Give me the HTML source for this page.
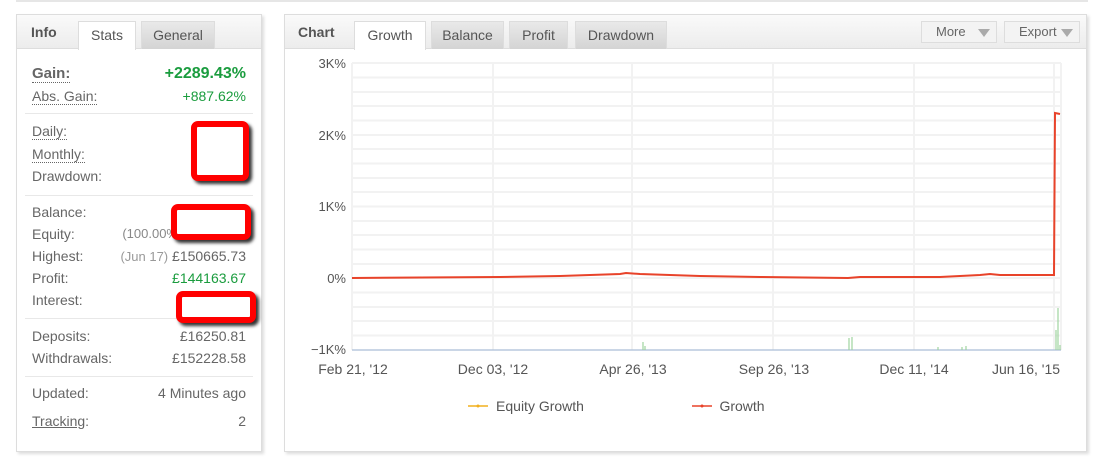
<!DOCTYPE html>
<html><head><style>
body{margin:0;width:1104px;height:462px;background:#fff;font-family:"Liberation Sans",Verdana,sans-serif;position:relative;overflow:hidden;color:#666}
.topbar{position:absolute;left:16px;top:0;width:1072px;height:2px;background:#e6e6e6}
.panel{position:absolute;border:1px solid #ddd;box-shadow:2px 2px 3px #ddd;background:#fff}
.hdr{position:absolute;left:0;top:0;right:0;height:33px;background:linear-gradient(#fafafa,#ececec);border-bottom:1px solid #ddd}
.tab{position:absolute;top:6px;height:27px;font-size:14px;line-height:27px;text-align:center;color:#555;border:1px solid #ddd;border-bottom:none;background:linear-gradient(#e9e9e9,#d4d4d4)}
.tab.act{background:#fff;height:28px}
.ttl{position:absolute;top:0;line-height:35px;font-weight:bold;font-size:14px;color:#555}
.row{position:absolute;left:15px;right:15px;font-size:14px;height:20px}
.row .l{position:absolute;left:0;color:#666}
.row .r{position:absolute;right:0;color:#666}
.u{border-bottom:1px dotted #666}
.g{color:#1a9c3e!important}
.sep{position:absolute;left:8px;right:8px;height:1px;background:#e8e8e8}
.red{position:absolute;border:6px solid #f00;border-radius:7px;background:#fff;box-shadow:3px 3px 3px #333}
.btn{position:absolute;top:6px;height:20px;border:1px solid #ddd;background:#f3f3f3;font-size:13px;line-height:20px;color:#666;padding-left:14px}
.btn i{position:absolute;right:6px;top:7px;border-left:6px solid transparent;border-right:6px solid transparent;border-top:8px solid #aaa}
</style></head><body>
<div class="topbar"></div>
<div class="panel" style="left:16px;top:14px;width:244px;height:436px">
 <div class="hdr"></div>
 <div class="ttl" style="left:14px">Info</div>
 <div class="tab act" style="left:61px;width:56px">Stats</div>
 <div class="tab" style="left:124px;width:72px">General</div>
 <div class="row" style="top:50px;font-weight:bold;font-size:15px"><span class="l u" style="font-weight:bold">Gain:</span><span class="r g" style="font-size:16px">+2289.43%</span></div>
 <div class="row" style="top:73px"><span class="l u">Abs. Gain:</span><span class="r g">+887.62%</span></div>
 <div class="sep" style="top:98px"></div>
 <div class="row" style="top:108px"><span class="l u">Daily:</span></div>
 <div class="row" style="top:131px"><span class="l u">Monthly:</span></div>
 <div class="row" style="top:153px"><span class="l">Drawdown:</span></div>
 <div class="sep" style="top:180px"></div>
 <div class="row" style="top:189px"><span class="l">Balance:</span></div>
 <div class="row" style="top:211px"><span class="l">Equity:</span><span class="r" style="right:68px;font-size:13px;color:#888">(100.00%</span></div>
 <div class="row" style="top:233px"><span class="l">Highest:</span><span class="r"><span style="color:#999;font-size:13px">(Jun 17)</span> £150665.73</span></div>
 <div class="row" style="top:255px"><span class="l">Profit:</span><span class="r g">£144163.67</span></div>
 <div class="row" style="top:277px"><span class="l">Interest:</span></div>
 <div class="sep" style="top:303px"></div>
 <div class="row" style="top:313px"><span class="l">Deposits:</span><span class="r">£16250.81</span></div>
 <div class="row" style="top:335px"><span class="l">Withdrawals:</span><span class="r">£152228.58</span></div>
 <div class="sep" style="top:361px"></div>
 <div class="row" style="top:370px"><span class="l">Updated:</span><span class="r">4 Minutes ago</span></div>
 <div class="row" style="top:398px"><span class="l"><span style="text-decoration:underline">Tracking</span>:</span><span class="r">2</span></div>
 <div class="red" style="left:174px;top:106px;width:46px;height:48px"></div>
 <div class="red" style="left:154px;top:189px;width:68px;height:24px"></div>
 <div class="red" style="left:159px;top:276px;width:68px;height:20px"></div>
</div>
<div class="panel" style="left:284px;top:14px;width:801px;height:436px">
 <div class="hdr"></div>
 <div class="ttl" style="left:13px">Chart</div>
 <div class="tab act" style="left:69px;width:70px">Growth</div>
 <div class="tab" style="left:146px;width:71px">Balance</div>
 <div class="tab" style="left:224px;width:57px">Profit</div>
 <div class="tab" style="left:290px;width:90px">Drawdown</div>
 <div class="btn" style="left:636px;width:60px">More<i></i></div>
 <div class="btn" style="left:719px;width:60px">Export<i></i></div>
</div>
<svg style="position:absolute;left:0;top:0" width="1104" height="462">
 <g stroke="#f2f2f2" stroke-width="2">
  <path d="M352 63V350M493 63V350M632 63V350M773 63V350M914 63V350M1054 63V350M1061 63V350"/>
  <path d="M352 63H1061M352 77.5H1061M352 92H1061M352 106H1061M352 120.5H1061M352 135H1061M352 149H1061M352 163.5H1061M352 178H1061M352 192H1061M352 206.5H1061M352 221H1061M352 235H1061M352 249.5H1061M352 264H1061M352 278H1061M352 292.5H1061M352 307H1061M352 321H1061M352 335.5H1061"/>
 </g>
 <path d="M352 350H1061" stroke="#b8c8dd" stroke-width="1.5"/>
 <g stroke="#9fd49f" stroke-width="1.2">
  <path d="M643 350V342M645 350V346M849 350V338M852 350V337M938 350V347M962 350V347M966 350V346M1056 350V330M1058 350V308M1060 350V345"/>
 </g>
 <path d="M352 278L500 277L560 276L620 274L626 273L640 274L700 276L760 277L848 278L860 277L940 277L980 275L990 274L1000 275L1054 275L1055 113L1060 114" fill="none" stroke="#e8432a" stroke-width="2"/>
 <g font-family="Liberation Sans,sans-serif" font-size="13" fill="#555" text-anchor="end">
  <text x="346" y="68">3K%</text><text x="346" y="140">2K%</text><text x="346" y="211">1K%</text><text x="346" y="283">0%</text><text x="346" y="354">−1K%</text>
 </g>
 <g font-family="Liberation Sans,sans-serif" font-size="14" fill="#555" text-anchor="middle">
  <text x="353" y="374">Feb 21, '12</text><text x="493" y="374">Dec 03, '12</text><text x="633" y="374">Apr 26, '13</text><text x="774" y="374">Sep 26, '13</text><text x="914" y="374">Dec 11, '14</text><text x="1026" y="374">Jun 16, '15</text>
  <text x="540" y="411">Equity Growth</text><text x="742" y="411">Growth</text>
 </g>
 <path d="M468 406H488" stroke="#f2b01e" stroke-width="1.5"/><circle cx="478" cy="406" r="1.5" fill="#f2b01e"/>
 <path d="M692 406H712" stroke="#e8432a" stroke-width="1.5"/><circle cx="702" cy="406" r="1.5" fill="#e8432a"/>
</svg>
</body></html>
